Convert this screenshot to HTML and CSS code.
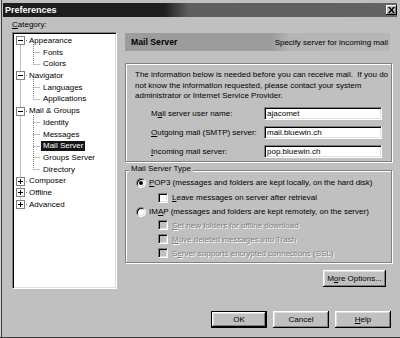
FILE: index.html
```html
<!DOCTYPE html>
<html>
<head>
<meta charset="utf-8">
<link rel="stylesheet" href="styles.css">
</head>
<body>
<div class="window">
  <div class="titlebar">
    <span class="title">Preferences</span>
    <span class="close"><svg width="7" height="6" viewBox="0 0 7 6"><path d="M0 0h2l1.5 2L5 0h2L4.5 3L7 6H5L3.5 4L2 6H0l2.5-3z" fill="#000"/></svg></span>
  </div>
  <div class="main">
    <div class="left">
      <div class="cat"><u>C</u>ategory:</div>
      <div class="tree">
        <svg class="lines" width="103" height="255" viewBox="0 0 103 255">
          <g stroke="#808080" stroke-width="1" stroke-dasharray="1 1" fill="none">
            <path d="M7.5 7.5V171.5"/>
            <path d="M11 7.5H14M11 42.5H14M11 78.5H14M11 148.5H14M11 159.5H14M11 171.5H14"/>
            <path d="M20.5 11V31.5M20.5 19.5H27M20.5 31.5H27"/>
            <path d="M20.5 46V66.5M20.5 54.5H27M20.5 66.5H27"/>
            <path d="M20.5 82V136.5M20.5 89.5H27M20.5 101.5H27M20.5 113.5H27M20.5 124.5H27M20.5 136.5H27"/>
          </g>
          <g stroke="#808080" fill="#fff">
            <rect x="3.5" y="3.5" width="8" height="8"/>
            <rect x="3.5" y="38.5" width="8" height="8"/>
            <rect x="3.5" y="74.5" width="8" height="8"/>
            <rect x="3.5" y="144.5" width="8" height="8"/>
            <rect x="3.5" y="155.5" width="8" height="8"/>
            <rect x="3.5" y="167.5" width="8" height="8"/>
          </g>
          <g stroke="#000" fill="none">
            <path d="M5 7.5H10M5 42.5H10M5 78.5H10M5 148.5H10M5 159.5H10M5 171.5H10"/>
            <path d="M7.5 146V151M7.5 157V162M7.5 169V174"/>
          </g>
        </svg>
        <div class="row r">Appearance</div>
        <div class="row c">Fonts</div>
        <div class="row c">Colors</div>
        <div class="row r">Navigator</div>
        <div class="row c">Languages</div>
        <div class="row c">Applications</div>
        <div class="row r">Mail &amp; Groups</div>
        <div class="row c">Identity</div>
        <div class="row c">Messages</div>
        <div class="row c"><span class="sel">Mail Server</span></div>
        <div class="row c">Groups Server</div>
        <div class="row c">Directory</div>
        <div class="row r">Composer</div>
        <div class="row r">Offline</div>
        <div class="row r">Advanced</div>
      </div>
    </div>
    <div class="right">
      <div class="header"><b>Mail Server</b><span>Specify server for incoming mail</span></div>
      <div class="group g1">
        <p class="info">The information below is needed before you can receive mail.&nbsp; If you do<br>not know the information requested, please contact your system<br>administrator or Internet Service Provider.</p>
        <div class="form">
          <span class="lbl">M<u>a</u>il server user name:</span><span class="input">ajacomet</span>
          <span class="lbl"><u>O</u>utgoing mail (SMTP) server:</span><span class="input">mail.bluewin.ch</span>
          <span class="lbl"><u>I</u>ncoming mail server:</span><span class="input">pop.bluewin.ch</span>
        </div>
      </div>
      <div class="group g2">
        <div class="legend">Mail Server Type</div>
        <div class="opt h15"><span class="radio on"></span><span><u>P</u>OP3 (messages and folders are kept locally, on the hard disk)</span></div>
        <div class="opt sub h15"><span class="check"></span><span><u>L</u>eave messages on server after retrieval</span></div>
        <div class="opt h13"><span class="radio"></span><span>IM<u>A</u>P (messages and folders are kept remotely, on the server)</span></div>
        <div class="opt sub dis"><span class="check"></span><span><u>S</u>et new folders for offline download</span></div>
        <div class="opt sub dis"><span class="check"></span><span><u>M</u>ove deleted messages into Trash</span></div>
        <div class="opt sub dis"><span class="check"></span><span>S<u>e</u>rver supports encrypted connections (SSL)</span></div>
      </div>
      <div class="more-row"><span class="btn more">M<u>o</u>re Options...</span></div>
    </div>
  </div>
  <div class="footer">
    <span class="btn def">OK</span>
    <span class="btn">Cancel</span>
    <span class="btn"><u>H</u>elp</span>
  </div>
</div>
</body>
</html>
```
FILE: styles.css
```css
* { box-sizing: border-box; }
html, body { margin: 0; padding: 0; }
body {
  width: 400px; height: 338px; overflow: hidden;
  font-family: "Liberation Sans", Arial, sans-serif;
  font-size: 8px; color: #000; background: #c0c0c0;
}
.window {
  height: 338px;
  padding: 3px 3px 0 3px;
  background: linear-gradient(90deg, #d4d4d4 0 1px, #3a3a3a 1px 2px, #c0c0c0 2px);
  border-bottom: 1px solid #3a3a3a;
  display: flex; flex-direction: column;
}
.titlebar {
  height: 14px; flex: none;
  display: flex; align-items: center; justify-content: space-between;
  padding: 0 0 0 2px;
  background: linear-gradient(90deg, #1e1e1e 0, #1e1e1e 41%, #5e5e5e 47%, #636363 100%);
}
.title { color: #fff; font-weight: bold; font-size: 9px; }
.close {
  width: 11px; height: 10px; background: #c0c0c0;
  box-shadow: inset -1px -1px #000, inset 1px 1px #fff, inset -2px -2px #808080;
  display: flex; align-items: center; justify-content: center; padding-bottom: 1px;
}
.close svg { display: block; }
.main { display: flex; gap: 8px; padding-left: 9px; flex: none; }
.left { width: 105px; }
.cat { margin-top: 3px; line-height: 10px; }
.tree {
  margin-top: 2px; height: 257px; background: #fff; position: relative;
  border: 1px solid; border-color: #808080 #fff #fff #808080;
  box-shadow: inset 1px 1px #000, inset -1px -1px #dfdfdf;
  padding-top: 2px;
}
.lines { position: absolute; left: 0; top: 0; }
.row { height: 11.7px; line-height: 11.7px; white-space: nowrap; position: relative; }
.r { padding-left: 16px; }
.c { padding-left: 30px; }
.sel {
  display: inline-block; background: #141414; color: #fff;
  padding: 0 2px; margin-left: -2px; line-height: 10px;
}
.right { width: 267px; }
.header {
  margin-top: 16px; width: 265px; height: 18px;
  display: flex; align-items: center; justify-content: space-between;
  padding: 0 2px 0 6px;
  background: linear-gradient(90deg, #9c9c9c 0, #9c9c9c 55%, #b4b4b4 62%, #b6b6b6 100%);
}
.header b { font-size: 8.7px; }
.group {
  border: 1px solid #808080;
  box-shadow: inset 1px 1px #fff, 1px 1px #fff;
}
.g1 { margin-top: 12px; height: 99px; padding: 6px 0 0 9px; }
.info { margin: 0; line-height: 10.5px; white-space: nowrap; }
.form {
  margin-top: 5.5px; padding-left: 16px;
  display: grid; grid-template-columns: 113px 118px; grid-auto-rows: 13px; row-gap: 6px;
}
.lbl { line-height: 13px; white-space: nowrap; }
.input {
  background: #fff; line-height: 11px; padding-left: 2px;
  border: 1px solid; border-color: #808080 #fff #fff #808080;
  box-shadow: inset 1px 1px #000, inset -1px -1px #dfdfdf;
}
.g2 { margin-top: 8px; height: 93px; }
.legend {
  display: table; margin: -7px 0 1px 3px; padding: 0 2px;
  background: #c0c0c0; line-height: 10px;
}
.opt { display: flex; align-items: center; height: 14px; padding-left: 10px; gap: 3px; white-space: nowrap; }
.h15 { height: 15px; }
.h13 { height: 13px; }
.sub { padding-left: 32px; gap: 4px; }
.radio {
  width: 10px; height: 10px; border-radius: 50%; background: #fff; flex: none;
  border: 1px solid; border-color: #808080 #fff #fff #808080;
  box-shadow: inset 1px 1px #000, inset -1px -1px #dfdfdf;
  display: flex; align-items: center; justify-content: center;
}
.radio.on::after { content: ""; width: 4px; height: 4px; border-radius: 50%; background: #000; }
.check {
  width: 10px; height: 10px; background: #fff; flex: none;
  border: 1px solid; border-color: #808080 #fff #fff #808080;
  box-shadow: inset 1px 1px #000, inset -1px -1px #dfdfdf;
}
.dis { color: #808080; text-shadow: 1px 1px 0 #fff; }
.dis .check { background: #c0c0c0; }
.more-row { display: flex; justify-content: flex-end; margin-top: 7px; padding-right: 6px; }
.btn {
  height: 17px; width: 56px; background: #c0c0c0;
  box-shadow: inset -1px -1px #000, inset 1px 1px #fff, inset -2px -2px #808080, inset 2px 2px #dfdfdf;
  display: flex; align-items: center; justify-content: center; white-space: nowrap;
}
.more { width: 63px; }
.def { border: 1px solid #000; }
.footer { display: flex; justify-content: flex-end; gap: 6px; padding-right: 6px; margin-top: 22px; }
```
